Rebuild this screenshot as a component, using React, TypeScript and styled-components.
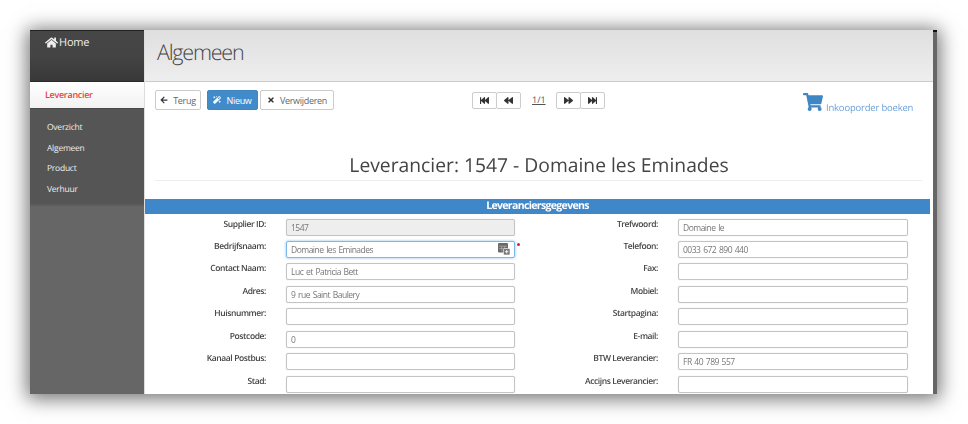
import React from "react";
import styled, { createGlobalStyle } from "styled-components";
import {
  FaHome, FaArrowLeft, FaMagic, FaTimes, FaFastBackward, FaBackward,
  FaForward, FaFastForward, FaShoppingCart,
} from "react-icons/fa";

const Global = createGlobalStyle`
  html, body { margin: 0; padding: 0; background: #fff; height: 424px; overflow: hidden; }
  * { box-sizing: border-box; }
  body { font-family: "Open Sans", "Liberation Sans", sans-serif; text-rendering: geometricPrecision; }
`;

const Frame = styled.div`
  display: flex;
  width: 907px;
  height: 364px;
  margin: 30px 0 0 30px;
  overflow: hidden;
  box-shadow: 0 2px 18px 3px rgba(0,0,0,.55);
  filter: blur(0.45px);
`;
const Sidebar = styled.aside`
  width: 114px;
  flex: none;
  display: flex;
  flex-direction: column;
  background: #666;
`;
const HomeBlock = styled.div`
  height: 52px;
  padding: 4px 0 0 15px;
  display: flex;
  align-items: flex-start;
  gap: 1px;
  color: #eee;
  font-size: 11px;
  letter-spacing: -0.2px;
  line-height: 16px;
  background: linear-gradient(#464646, #444 50%, #383838);
  border-top: 1px solid #222;
  border-bottom: 1px solid #2c2c2c;
  svg { width: 13px; height: 13px; margin-top: 1px; }
`;
const ActiveItem = styled.div`
  height: 26px;
  padding: 0 0 1px 15px;
  display: flex;
  align-items: center;
  color: #e8413a;
  font-size: 9px;
  letter-spacing: -0.3px;
  font-weight: 600;
  background: linear-gradient(#fff, #f2f2f2);
`;
const SubMenu = styled.nav`
  height: 98px;
  padding: 8px 0 0 17px;
  background: #555;
  border-top: 1px solid #484848;
  border-bottom: 2px solid #5c5c5c;
  display: flex;
  flex-direction: column;
`;
const SubItem = styled.a`
  height: 20.5px;
  line-height: 21px;
  font-size: 8.5px;
  letter-spacing: -0.25px;
  font-weight: 500;
  color: #eee;
`;
const Main = styled.main`
  flex: 1;
  min-width: 0;
  display: flex;
  flex-direction: column;
  background: #fff;
  border-left: 1px solid #ddd;
`;
const Strip = styled.div`
  width: 4px;
  flex: none;
  background: linear-gradient(#111 0, #111 2px, #666 2px);
`;
const Header = styled.header`
  height: 52px;
  flex: none;
  padding: 4px 0 0 12px;
  background: linear-gradient(#dfdfdf, #eeeeee);
  border-bottom: 1px solid #ccc;
  font-size: 21.5px;
  font-weight: 300;
  line-height: 38px;
  letter-spacing: -1.2px;
  color: #444;
`;
const Toolbar = styled.div`
  height: 42px;
  flex: none;
  padding: 8px 0 0 10px;
  display: flex;
  align-items: flex-start;
`;
const Button = styled.button<{ $primary?: boolean; $w: number; $ml?: number }>`
  width: ${p => p.$w}px;
  height: 20px;
  padding: 0;
  margin-left: ${p => p.$ml ?? 0}px;
  display: inline-flex;
  align-items: center;
  justify-content: center;
  gap: 5px;
  font: 400 9px/1 "Open Sans", sans-serif;
  letter-spacing: -0.3px;
  color: ${p => (p.$primary ? "#fff" : "#666")};
  background: ${p => (p.$primary ? "#428bca" : "#fff")};
  border: 1px solid ${p => (p.$primary ? "#3f86c4" : "#ccc")};
  border-radius: 2px;
  svg { width: 8px; height: 8px; color: ${p => (p.$primary ? "#fff" : "#333")}; }
`;
const PagerGroup = styled.div<{ $ml: number }>`
  display: flex;
  margin-left: ${p => p.$ml}px;
  margin-top: 2px;
`;
const PagerButton = styled.button`
  width: 25px;
  height: 17px;
  padding: 0;
  display: inline-flex;
  align-items: center;
  justify-content: center;
  background: #fff;
  border: 1px solid #ccc;
  margin-left: -1px;
  border-radius: 2px;
  color: #333;
  svg { width: 9px; height: 9px; }
`;
const PageLink = styled.a`
  width: 13px;
  margin: 3px 0 0 11px;
  font-size: 9px;
  line-height: 14px;
  color: #555;
  text-decoration: underline;
`;
const OrderLink = styled.a`
  margin: 3px 0 0 198px;
  display: flex;
  align-items: flex-end;
  gap: 3px;
  font-size: 9.5px;
  letter-spacing: -0.2px;
  line-height: 7px;
  white-space: nowrap;
  color: #6b9fd6;
  svg { width: 20px; height: 18px; color: #3f86c4; }
`;
const Title = styled.h1`
  margin: 0 11px 0 10px;
  height: 57px;
  padding: 28px 0 0 1px;
  flex: none;
  text-align: center;
  font-size: 19.3px;
  font-weight: 400;
  line-height: 26px;
  color: #444;
  border-bottom: 1px solid #eee;
`;
const SectionBar = styled.div`
  margin: 18px 3px 0 0;
  height: 15px;
  flex: none;
  text-align: center;
  font-size: 10.5px;
  letter-spacing: -0.65px;
  font-weight: 700;
  line-height: 14px;
  color: #fff;
  background: #3f87c8;
`;
const Form = styled.div`
  margin-top: 4.5px;
  display: grid;
  grid-template-columns: 370px 393px;
  grid-auto-rows: 17px;
  row-gap: 5.45px;
`;
const Field = styled.div<{ $label: number }>`
  display: grid;
  grid-template-columns: ${p => p.$label}px 1fr;
  column-gap: 20px;
  height: 17px;
`;
const Label = styled.label`
  text-align: right;
  font-size: 8.5px;
  letter-spacing: -0.4px;
  font-weight: 600;
  line-height: 12px;
  color: #444;
`;
const InputWrap = styled.div`
  position: relative;
`;
const Input = styled.input<{ $focus?: boolean }>`
  display: block;
  width: 100%;
  height: 17px;
  padding: 0 4px;
  font: 400 8.5px "Open Sans", sans-serif;
  letter-spacing: -0.5px;
  word-spacing: 1px;
  color: #777;
  background: #fff;
  border: 1px solid ${p => (p.$focus ? "#7db8ea" : "#c4c4c4")};
  border-radius: 2px;
  outline: none;
  box-shadow: ${p => (p.$focus ? "0 0 3px rgba(102,175,233,.8)" : "0 0 1px rgba(0,0,0,.2)")};
  &[data-locked="true"] { background: #eee; }
`;
const LookupIcon = styled.svg`
  position: absolute;
  right: 5px;
  top: 2px;
  width: 12px;
  height: 12px;
`;
const Required = styled.span`
  position: absolute;
  right: -5px;
  top: 2.5px;
  width: 3px;
  height: 3px;
  border-radius: 50%;
  background: #e8182c;
`;

const left: [string, string][] = [
  ["Supplier ID:", "1547"],
  ["Bedrijfsnaam:", "Domaine les Eminades"],
  ["Contact Naam:", "Luc et Patricia Bett"],
  ["Adres:", "9 rue Saint Baulery"],
  ["Huisnummer:", ""],
  ["Postcode:", "0"],
  ["Kanaal Postbus:", ""],
  ["Stad:", ""],
];
const right: [string, string][] = [
  ["Trefwoord:", "Domaine le"],
  ["Telefoon:", "0033 672 890 440"],
  ["Fax:", ""],
  ["Mobiel:", ""],
  ["Startpagina:", ""],
  ["E-mail:", ""],
  ["BTW Leverancier:", "FR 40 789 557"],
  ["Accijns Leverancier:", ""],
];

export default function App() {
  return (
    <>
      <Global />
      <Frame>
        <Sidebar>
          <HomeBlock><FaHome /> Home</HomeBlock>
          <ActiveItem>Leverancier</ActiveItem>
          <SubMenu>
            <SubItem>Overzicht</SubItem>
            <SubItem>Algemeen</SubItem>
            <SubItem>Product</SubItem>
            <SubItem>Verhuur</SubItem>
          </SubMenu>
        </Sidebar>
        <Main>
          <Header>Algemeen</Header>
          <Toolbar>
            <Button $w={46}><FaArrowLeft /> Terug</Button>
            <Button $primary $w={51} $ml={6}><FaMagic /> Nieuw</Button>
            <Button $w={74} $ml={2}><FaTimes /> Verwijderen</Button>
            <PagerGroup $ml={139}>
              <PagerButton><FaFastBackward /></PagerButton>
              <PagerButton><FaBackward /></PagerButton>
            </PagerGroup>
            <PageLink>1/1</PageLink>
            <PagerGroup $ml={12}>
              <PagerButton><FaForward /></PagerButton>
              <PagerButton><FaFastForward /></PagerButton>
            </PagerGroup>
            <OrderLink><FaShoppingCart /> Inkooporder boeken</OrderLink>
          </Toolbar>
          <Title>Leverancier: 1547 - Domaine les Eminades</Title>
          <SectionBar>Leveranciersgegevens</SectionBar>
          <Form>
            {left.map(([l, v], i) => (
              <React.Fragment key={l}>
                <Field $label={121}>
                  <Label>{l}</Label>
                  <InputWrap>
                    <Input readOnly value={v} $focus={i === 1} data-locked={i === 0} />
                    {i === 1 && (
                      <>
                        <LookupIcon viewBox="0 0 12 12">
                          <rect x="0" y="0" width="10" height="9.5" rx="1" fill="#6a6a6a" />
                          <path d="M1 3.2h8M1 5.6h8M3.8 3.2v5M6.6 3.2v5" stroke="#bbb" strokeWidth=".6" />
                          <rect x="5.5" y="5.5" width="6.5" height="6.5" rx="1" fill="#777" stroke="#fff" strokeWidth=".6" />
                          <path d="M8.7 7v3.4M7 8.7h3.4" stroke="#fff" strokeWidth=".9" />
                        </LookupIcon>
                        <Required />
                      </>
                    )}
                  </InputWrap>
                </Field>
                <Field $label={143}>
                  <Label>{right[i][0]}</Label>
                  <InputWrap>
                    <Input readOnly value={right[i][1]} />
                  </InputWrap>
                </Field>
              </React.Fragment>
            ))}
          </Form>
        </Main>
        <Strip />
      </Frame>
    </>
  );
}
